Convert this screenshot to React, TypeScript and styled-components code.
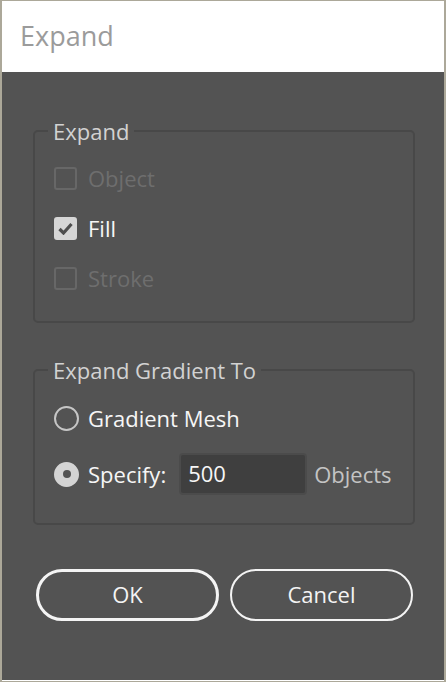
import React, { ReactElement } from 'react';
import styled, { createGlobalStyle } from 'styled-components';

const GlobalStyle = createGlobalStyle`
  html, body {
    margin: 0;
    padding: 0;
    background: #aca899;
  }
  * {
    box-sizing: border-box;
  }
`;

const Window = styled.div`
  width: 446px;
  height: 682px;
  display: flex;
  flex-direction: column;
  border-style: solid;
  border-color: #aca899;
  border-width: 1px 2px 1px 2px;
  font-family: 'Open Sans', 'Noto Sans', sans-serif;
`;

const TitleBar = styled.div`
  height: 71px;
  flex: none;
  background: #ffffff;
  display: flex;
  align-items: center;
  padding: 0 0 2px 18px;
  font-size: 27px;
  color: #9b9b9b;
`;

const Body = styled.div`
  flex: 1;
  background: #535353;
  border-bottom: 1px solid #ffffff;
  padding: 44px 0 0 31px;
  display: flex;
  flex-direction: column;
`;

const Group = styled.fieldset<{ $gap: number; $bottom: number }>`
  width: 382px;
  margin: 0 0 ${(p) => p.$gap}px 0;
  padding: 0 0 ${(p) => p.$bottom}px 19px;
  border: 2px solid #484848;
  border-radius: 5px;
  min-width: 0;
`;

const Legend = styled.legend`
  margin-left: -6px;
  padding: 0 5px;
  font-size: 22px;
  line-height: 30px;
  color: #d2d2d2;
`;

const List = styled.div<{ $row: number; $top: number }>`
  display: grid;
  grid-auto-rows: ${(p) => p.$row}px;
  padding-top: ${(p) => p.$top}px;
`;

const Row = styled.label`
  display: flex;
  align-items: center;
`;

const Box = styled.span<{ $checked?: boolean }>`
  width: 23px;
  height: 23px;
  border-radius: 3px;
  margin-right: 11px;
  display: flex;
  align-items: center;
  justify-content: center;
  background: ${(p) => (p.$checked ? '#d6d6d6' : 'transparent')};
  border: 2px solid ${(p) => (p.$checked ? '#d6d6d6' : '#676767')};
`;

const Radio = styled.span<{ $checked?: boolean }>`
  width: 25px;
  height: 25px;
  border-radius: 50%;
  margin-right: 9px;
  display: flex;
  align-items: center;
  justify-content: center;
  background: ${(p) => (p.$checked ? '#d4d4d4' : 'transparent')};
  border: 2px solid ${(p) => (p.$checked ? '#d4d4d4' : '#c6c6c6')};

  &::after {
    content: '';
    display: ${(p) => (p.$checked ? 'block' : 'none')};
    width: 8px;
    height: 8px;
    border-radius: 50%;
    background: #535353;
  }
`;

const Text = styled.span<{ $tone?: 'on' | 'off' | 'dim' }>`
  font-size: 22px;
  color: ${(p) => (p.$tone === 'off' ? '#6e6e6e' : p.$tone === 'dim' ? '#c4c4c4' : '#f6f6f6')};
`;

const NumberInput = styled.input`
  width: 128px;
  height: 42px;
  margin: 0 7px 0 13px;
  padding: 0 0 2px 7px;
  background: #3f3f3f;
  border: 2px solid #4b4b4b;
  border-radius: 4px;
  outline: none;
  font-family: inherit;
  font-size: 22px;
  color: #f6f6f6;
`;

const Buttons = styled.div`
  display: flex;
  gap: 11px;
  padding-left: 3px;
`;

const Button = styled.button<{ $primary?: boolean }>`
  width: 183px;
  height: 52px;
  border-radius: 26px;
  background: transparent;
  border: ${(p) => (p.$primary ? 3 : 2)}px solid #f4f4f4;
  color: #f4f4f4;
  font-family: inherit;
  font-size: 22px;
  padding: 0 0 2px;
`;

const Check = (): ReactElement => (
  <svg width="15" height="13" viewBox="0 0 15 13">
    <path d="M1.5 7 L5.5 11 L13.5 2" fill="none" stroke="#4e4e4e" strokeWidth="3.2" />
  </svg>
);

const expandItems = [
  { name: 'Object', checked: false, enabled: false },
  { name: 'Fill', checked: true, enabled: true },
  { name: 'Stroke', checked: false, enabled: false },
];

const App = (): ReactElement => (
  <>
    <GlobalStyle />
    <Window>
      <TitleBar>Expand</TitleBar>
      <Body>
        <Group $gap={32} $bottom={18}>
          <Legend>Expand</Legend>
          <List $row={50} $top={7}>
            {expandItems.map((item) => (
              <Row key={item.name}>
                <Box $checked={item.checked}>{item.checked && <Check />}</Box>
                <Text $tone={item.enabled ? 'on' : 'off'}>{item.name}</Text>
              </Row>
            ))}
          </List>
        </Group>
        <Group $gap={44} $bottom={21}>
          <Legend>Expand Gradient To</Legend>
          <List $row={56} $top={5}>
            <Row>
              <Radio />
              <Text>Gradient Mesh</Text>
            </Row>
            <Row>
              <Radio $checked />
              <Text>Specify:</Text>
              <NumberInput defaultValue="500" />
              <Text $tone="dim">Objects</Text>
            </Row>
          </List>
        </Group>
        <Buttons>
          <Button $primary>OK</Button>
          <Button>Cancel</Button>
        </Buttons>
      </Body>
    </Window>
  </>
);

export default App;
